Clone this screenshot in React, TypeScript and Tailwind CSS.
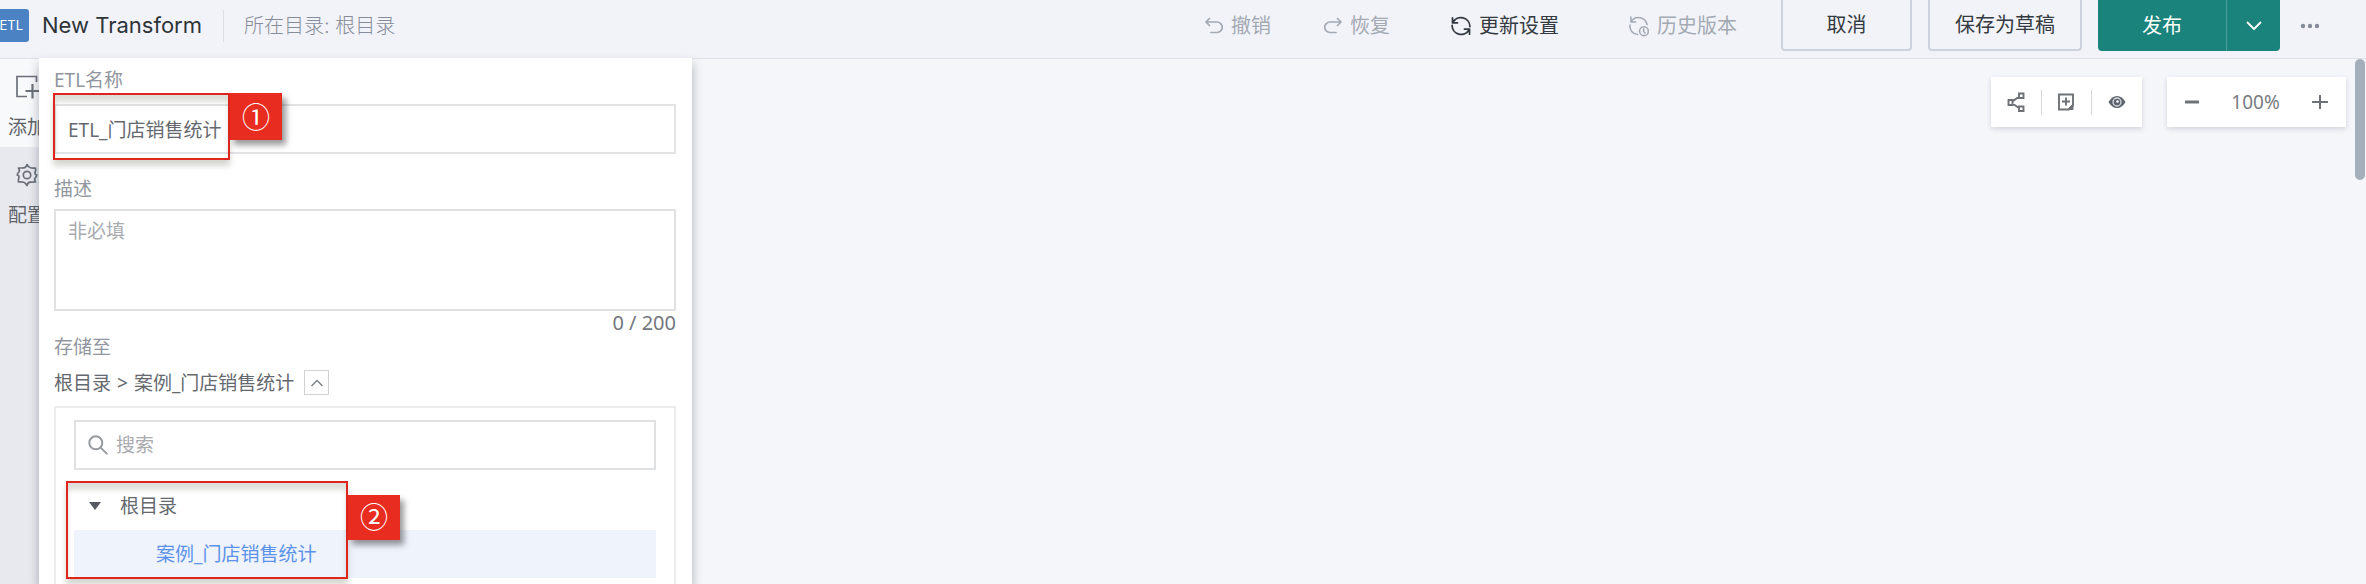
import { useState } from 'react';
import type { ReactNode } from 'react';

interface ToolButtonProps {
  label: string;
  icon: ReactNode;
  active?: boolean;
}

function UndoIcon() {
  return (
    <svg width="18" height="18" viewBox="0 0 18 18" fill="none" stroke="currentColor" strokeWidth="1.7" strokeLinecap="round" strokeLinejoin="round">
      <path d="M4.5 1.5 1 5l3.500 3.500M1 5h11a5 5 0 0 1 0 10.500H6" />
    </svg>
  );
}

function RedoIcon() {
  return (
    <svg width="18" height="18" viewBox="0 0 18 18" fill="none" stroke="currentColor" strokeWidth="1.7" strokeLinecap="round" strokeLinejoin="round">
      <path d="M13.500 1.500 17 5l-3.500 3.500M17 5H6a5 5 0 0 0 0 10.500H12" />
    </svg>
  );
}

function RefreshIcon() {
  return (
    <svg width="20" height="20" viewBox="0 0 20 20" fill="none" stroke="currentColor" strokeWidth="1.8" strokeLinecap="round" strokeLinejoin="round">
      <path d="M1.500 1.800v5h5M2 6.300a9 9 0 0 1 16.900 4.200M18.500 18.200v-5h-5M18 13.700A9 9 0 0 1 1.100 9.500" />
    </svg>
  );
}

function HistoryIcon() {
  return (
    <svg width="20" height="22" viewBox="0 0 21 22" fill="none" stroke="currentColor" strokeWidth="1.6" strokeLinecap="round" strokeLinejoin="round">
      <path d="M2 1.500v5.200h5M2.500 6.200A9 9 0 0 1 18.900 9.500M1 10a9 9 0 0 0 8 10" />
      <circle cx="15.700" cy="16.500" r="4.600" />
      <path d="M15.400 14v3l1.500 1.300" />
    </svg>
  );
}

function SearchIcon() {
  return (
    <svg width="20" height="20" viewBox="0 0 20 20" fill="none" stroke="#979a9f" strokeWidth="2" strokeLinecap="round">
      <circle cx="7.800" cy="7.800" r="6.500" />
      <path d="m12.600 12.600 6.200 6" />
    </svg>
  );
}

function GearIcon() {
  return (
    <svg width="22" height="24" viewBox="0 0 22 24" className="shrink-0" fill="none" stroke="#6b7078" strokeWidth="1.7" strokeLinejoin="round">
      <path d="M11 1.500Q12.500 4.300 14.300 4.800T19.500 5Q20 6.500 19.200 9T20.800 12Q20.500 13.500 19.200 15T19.500 19Q17 19 14.300 19.200T11 22.500Q9.500 19.700 7.700 19.200T2.500 19Q2 17.500 2.800 15T1.200 12Q1.500 10.500 2.800 9T2.500 5Q5 5 7.700 4.800T11 1.500Z" />
      <circle cx="11" cy="12" r="3.700" />
    </svg>
  );
}

function AddNodeIcon() {
  return (
    <svg width="26" height="24" viewBox="0 0 26 24" className="shrink-0" fill="none" stroke="#6b7078" strokeWidth="1.700">
      <path d="M20.500 7V1.500H1v20h10" />
      <path d="M9.500 16H25M16.500 9v14.500" strokeWidth="2.200" />
    </svg>
  );
}

function ToolButton({ label, icon, active }: ToolButtonProps) {
  return (
    <button
      type="button"
      disabled={!active}
      className={`flex items-center gap-2 ${active ? 'text-[#343a41]' : 'text-[#a3aab4]'}`}
    >
      {icon}
      <span>{label}</span>
    </button>
  );
}

export default function App() {
  const [name, setName] = useState('ETL_门店销售统计');
  const [description, setDescription] = useState('');
  const [keyword, setKeyword] = useState('');
  const [zoom, setZoom] = useState(100);
  const [treeOpen, setTreeOpen] = useState(true);

  return (
    <div className="flex h-screen flex-col overflow-hidden bg-[#f5f6fa] font-['Noto_Sans','Noto_Sans_CJK_SC',sans-serif] text-[19px] leading-6 text-[#65696f]">
      <header className="h-[58px] shrink-0 bg-[#f2f3f8] font-['Inter','Noto_Sans_CJK_SC',sans-serif] text-xl">
        <div className="flex h-[51px] items-center">
          <span className="flex h-[33px] w-[29px] items-center justify-end rounded-r-[3px] bg-[#4b82c3] pr-[6px] text-[13px] text-white">
            ETL
          </span>
          <h1 className="ml-[13px] text-[22px] text-[#2e3338]">New Transform</h1>
          <div className="ml-[21px] h-8 w-px bg-[#dcdee3]" />
          <p className="ml-5 font-light text-[#868c98]">所在目录: 根目录</p>

          <div className="ml-auto flex items-center">
            <div className="flex items-center gap-[53px]">
              <ToolButton label="撤销" icon={<UndoIcon />} />
              <ToolButton label="恢复" icon={<RedoIcon />} />
            </div>
            <div className="ml-[61px] flex items-center gap-[70px]">
              <ToolButton label="更新设置" icon={<RefreshIcon />} active />
              <ToolButton label="历史版本" icon={<HistoryIcon />} />
            </div>
            <div className="ml-11 flex h-[51px] gap-4 text-[#343a41]">
              <button type="button" className="w-[131px] rounded-b-[4px] border-2 border-t-0 border-[#cdd2dc]">
                取消
              </button>
              <button type="button" className="w-[154px] rounded-b-[4px] border-2 border-t-0 border-[#cdd2dc]">
                保存为草稿
              </button>
              <div className="flex overflow-hidden rounded-b-[4px] bg-[#1a837c] text-white">
                <button type="button" className="w-32">发布</button>
                <button type="button" aria-label="更多发布选项" className="flex w-[54px] items-center justify-center border-l border-[#4b9f99]">
                  <svg width="16" height="10" viewBox="0 0 16 10" fill="none" stroke="currentColor" strokeWidth="1.800" strokeLinecap="round" strokeLinejoin="round">
                    <path d="m1.500 1.500 6.500 6.500 6.500-6.500" />
                  </svg>
                </button>
              </div>
            </div>
            <button type="button" aria-label="更多" className="mr-[46px] ml-5">
              <svg width="20" height="6" viewBox="0 0 20 6" fill="#858b98">
                <circle cx="3" cy="3" r="2.200" />
                <circle cx="10" cy="3" r="2.200" />
                <circle cx="17" cy="3" r="2.200" />
              </svg>
            </button>
          </div>
        </div>
      </header>

      <main className="flex min-h-0 flex-1">
        <nav className="w-[39px] shrink-0 overflow-hidden border-t border-[#dfe1e6] bg-[#e8e9ee] whitespace-nowrap text-[#5f6369]">
          <button type="button" className="flex h-[88px] w-full flex-col items-start gap-4 bg-[#f8f9fb] pt-4">
            <span className="pl-4"><AddNodeIcon /></span>
            <span className="pl-2">添加</span>
          </button>
          <button type="button" className="flex h-[88px] w-full flex-col items-start gap-4 pt-4">
            <span className="pl-4"><GearIcon /></span>
            <span className="pl-2">配置</span>
          </button>
        </nav>

        <section className="relative w-[653px] shrink-0 bg-white pt-2.5 pr-4 pl-[15px] shadow-[0_6px_10px_rgba(60,70,90,0.4)]">
          <label htmlFor="etl-name" className="block text-[#9196a0]">ETL名称</label>
          <div className="relative mt-3">
            <input
              id="etl-name"
              value={name}
              onChange={(e) => setName(e.target.value)}
              className="block h-[50px] w-full border-2 border-[#e2e3e5] px-3 outline-none"
            />
            <div className="pointer-events-none absolute -top-[11px] -left-px flex items-start">
              <div className="h-[67px] w-[177px] border-2 border-[#df261d] shadow-[0_6px_6px_rgba(90,90,70,0.25),inset_0_7px_5px_rgba(90,90,70,0.2)]" />
              <span className="flex h-[47px] w-[52px] items-center justify-center bg-[#e92c20] pb-0.5 font-['Noto_Sans_CJK_SC',sans-serif] text-[28px] text-white shadow-[4px_5px_6px_rgba(0,0,0,0.4)]">
                ①
              </span>
            </div>
          </div>

          <label htmlFor="etl-desc" className="mt-[23px] block text-[#9196a0]">描述</label>
          <textarea
            id="etl-desc"
            value={description}
            maxLength={200}
            placeholder="非必填"
            onChange={(e) => setDescription(e.target.value)}
            className="mt-2 block h-[102px] w-full resize-none border-2 border-[#e0e1e3] px-3 py-2 outline-none placeholder:text-[#a9abaf]"
          />
          <p className="text-right text-xl leading-6 text-[#73777d]">{description.length} / 200</p>

          <p className="text-[#9196a0]">存储至</p>
          <div className="mt-[11px] flex h-[25px] items-center">
            <span>根目录</span>
            <span className="mx-1.5">&gt;</span>
            <span>案例_门店销售统计</span>
            <button
              type="button"
              aria-label="展开目录"
              onClick={() => setTreeOpen(!treeOpen)}
              className="ml-2.5 flex size-[25px] items-center justify-center border border-[#cfd1d4]"
            >
              <svg width="12" height="8" viewBox="0 0 12 8" fill="none" stroke="#777b80" strokeWidth="1.300">
                <path d="m.500 7 5.500-5.500L11.500 7" />
              </svg>
            </button>
          </div>

          {treeOpen && (
            <div className="mt-[11px] border-2 border-b-0 border-[#ebecee] px-[18px] pt-3 pb-6">
              <label className="flex h-[50px] items-center gap-2 border-2 border-[#e0e1e3] px-3">
                <SearchIcon />
                <input
                  aria-label="搜索"
                  placeholder="搜索"
                  value={keyword}
                  onChange={(e) => setKeyword(e.target.value)}
                  className="min-w-0 flex-1 outline-none placeholder:text-[#a9abaf]"
                />
              </label>
              <div className="relative mt-3">
                <button type="button" className="flex h-12 w-full items-center gap-[18px] pl-3.5">
                  <svg width="14" height="8" viewBox="0 0 14 8" fill="#55595f">
                    <path d="M1 0h12L7 8Z" />
                  </svg>
                  根目录
                </button>
                <button type="button" className="flex h-12 w-full items-center bg-[#eff3fc] pl-[82px] text-[#5c92e8]">
                  案例_门店销售统计
                </button>
                <div className="pointer-events-none absolute -top-px -left-2 flex items-start">
                  <div className="h-[98px] w-[282px] border-2 border-[#df261d] shadow-[0_6px_6px_rgba(90,90,70,0.25),inset_0_7px_5px_rgba(90,90,70,0.2)]" />
                  <span className="mt-3.5 flex h-[45px] w-[52px] items-center justify-center bg-[#e92c20] pb-1 font-['Noto_Sans_CJK_SC',sans-serif] text-[28px] text-white shadow-[4px_5px_6px_rgba(0,0,0,0.4)]">
                    ②
                  </span>
                </div>
              </div>
            </div>
          )}
        </section>

        <section className="flex min-w-0 flex-1 items-start justify-end border-t border-[#dfe1e6]">
          <div className="mt-[18px] flex h-[50px] w-[151px] items-center justify-evenly bg-white shadow-[0_2px_5px_rgba(50,60,80,0.18)]">
            <button type="button" aria-label="布局">
              <svg width="18" height="20" viewBox="0 0 18 20" fill="none" stroke="#6e7277" strokeWidth="1.900">
                <path d="M1.500 8h4v5h-4ZM12 1.500h4.500V6H12ZM12 14.500h4.500V19H12ZM5.500 9.500 12 4.500M5.500 11.500l6.500 4.500" />
              </svg>
            </button>
            <div className="h-[25px] w-px bg-[#d5d7da]" />
            <button type="button" aria-label="添加备注">
              <svg width="18" height="18" viewBox="0 0 18 18" fill="none" stroke="#6e7277" strokeWidth="1.900">
                <path d="M2 1.500h14v10.500l-4.500 4.500H2ZM9 4.500v8M5 8.500h8" />
                <path d="M16 11.500v5h-5Z" fill="#6e7277" strokeWidth="1" />
              </svg>
            </button>
            <div className="h-[25px] w-px bg-[#d5d7da]" />
            <button type="button" aria-label="预览">
              <svg width="18" height="14" viewBox="0 0 18 14">
                <path d="M.500 7Q4 1 9 1T17.500 7Q14 13 9 13T.500 7Z" fill="#5d636e" />
                <circle cx="9" cy="7" r="4" fill="#5d636e" stroke="#d8dbe0" strokeWidth="1.300" />
                <circle cx="9.500" cy="6.500" r="1.300" fill="#fff" />
              </svg>
            </button>
          </div>
          <div className="mt-[18px] mr-[9px] ml-[25px] flex h-[50px] w-[179px] items-center justify-between bg-white px-[18px] shadow-[0_2px_5px_rgba(50,60,80,0.18)]">
            <button type="button" aria-label="缩小" onClick={() => setZoom(zoom - 10)}>
              <svg width="14" height="16" viewBox="0 0 14 16" stroke="#6e7277" strokeWidth="3">
                <path d="M0 8h14" />
              </svg>
            </button>
            <span className="text-[#797c81]">{zoom}%</span>
            <button type="button" aria-label="放大" onClick={() => setZoom(zoom + 10)}>
              <svg width="16" height="16" viewBox="0 0 16 16" stroke="#6e7277" strokeWidth="2">
                <path d="M0 8h16M8 1v14" />
              </svg>
            </button>
          </div>
          <div className="mr-px h-[121px] w-[10px] rounded-full bg-[#a3afbb]" />
        </section>
      </main>
    </div>
  );
}
